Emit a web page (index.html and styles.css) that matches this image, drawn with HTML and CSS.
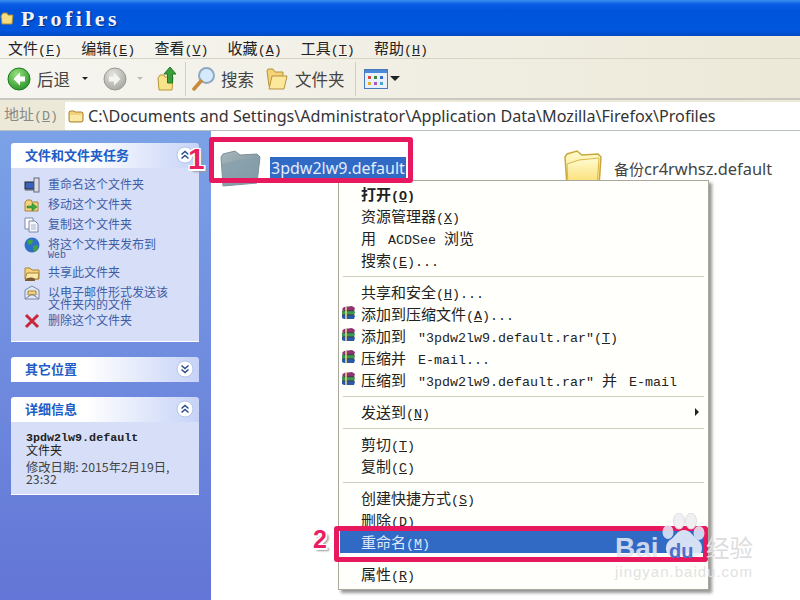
FILE: index.html
```html
<!DOCTYPE html>
<html lang="zh-CN">
<head>
    <meta charset="UTF-8">
    <title>Profiles</title>
    <link rel="stylesheet" href="styles.css">
</head>
<body>

<svg class="defs" width="0" height="0">
    <defs>
        <linearGradient id="yellow" x1="0" y1="0" x2="0" y2="1">
            <stop offset="0" stop-color="#fffbd0"/>
            <stop offset="1" stop-color="#fbdc6a"/>
        </linearGradient>
        <linearGradient id="grey" x1="0" y1="0" x2="1" y2="1">
            <stop offset="0" stop-color="#a9b8bb"/>
            <stop offset="1" stop-color="#6e8a99"/>
        </linearGradient>
        <radialGradient id="green" cx="0.4" cy="0.3" r="0.8">
            <stop offset="0" stop-color="#9be07f"/>
            <stop offset="1" stop-color="#1f8f22"/>
        </radialGradient>
        <radialGradient id="silver" cx="0.4" cy="0.3" r="0.8">
            <stop offset="0" stop-color="#e4e4e0"/>
            <stop offset="1" stop-color="#a3a39d"/>
        </radialGradient>
        <symbol id="rar" viewBox="0 0 14 14">
            <path d="M3 1l8-1 3 2-1 3H3L1 3z" fill="#8e3470"/>
            <path d="M1 5h12l1 1-1 3H2L1 8z" fill="#3a9a52"/>
            <path d="M1 9h12l1 1-1 3H3l-2-1z" fill="#2c58aa"/>
            <path d="M1 4.800h12.500M1 8.800h12.500" stroke="#3a3a3a" stroke-width="0.800"/>
            <path d="M5 1v12" stroke="#e6d88e" stroke-width="1.600"/>
        </symbol>
        <symbol id="chev-up" viewBox="0 0 18 18">
            <circle cx="9" cy="9" r="8" fill="#fff" stroke="#b5c4e8"/>
            <path d="M5.500 8.500 9 5.500l3.500 3M5.500 12.500 9 9.500l3.500 3" fill="none" stroke="#2a4a8c" stroke-width="1.500"/>
        </symbol>
        <symbol id="chev-down" viewBox="0 0 18 18">
            <circle cx="9" cy="9" r="8" fill="#fff" stroke="#b5c4e8"/>
            <path d="M5.500 5.500 9 8.500l3.500-3M5.500 9.500 9 12.500l3.500-3" fill="none" stroke="#2a4a8c" stroke-width="1.500"/>
        </symbol>
    </defs>
</svg>

<div class="window">
    <div class="titlebar">
        <svg class="title-icon" width="16" height="14" viewBox="0 0 16 14"><path d="M1 4l2-3h4l1 2h5l-1 9H2z" fill="#f5dc80" stroke="#a88a30"/></svg>
        <span class="title-text">Profiles</span>
    </div>

    <div class="menubar">
        <span class="menu-item">文件<span class="m">(<u>F</u>)</span></span>
        <span class="menu-item">编辑<span class="m">(<u>E</u>)</span></span>
        <span class="menu-item">查看<span class="m">(<u>V</u>)</span></span>
        <span class="menu-item">收藏<span class="m">(<u>A</u>)</span></span>
        <span class="menu-item">工具<span class="m">(<u>T</u>)</span></span>
        <span class="menu-item">帮助<span class="m">(<u>H</u>)</span></span>
    </div>

    <div class="toolbar">
        <svg class="nav-icon" width="24" height="24" viewBox="0 0 24 24"><circle cx="12" cy="12" r="11" fill="url(#green)" stroke="#1b7a20"/><path d="M13 5.500 6.500 12l6.500 6.500v-4h5v-5h-5z" fill="#fff"/></svg>
        <span class="tool-label back-label">后退</span>
        <span class="drop"></span>
        <svg class="nav-icon next" width="24" height="24" viewBox="0 0 24 24"><circle cx="12" cy="12" r="11" fill="url(#silver)" stroke="#9a9a94"/><path d="M11 5.500 17.500 12 11 18.500v-4H6v-5h5z" fill="#f4f4f0"/></svg>
        <span class="drop off"></span>
        <svg class="up-icon" width="20" height="26" viewBox="0 0 20 26"><path d="M1 12l2-3h4l1 2h8l-1 13H2z" fill="#f8e28a" stroke="#b8963a"/><path d="M13 1l6 7h-3.500v9h-5V8H7z" fill="#3a9f3a" stroke="#1f7a24"/></svg>
        <span class="tool-sep"></span>
        <svg class="search-icon" width="24" height="26" viewBox="0 0 24 26"><circle cx="14.500" cy="9.500" r="7.500" fill="#d5eafc" stroke="#8fa8c0" stroke-width="2"/><path d="M9 15 2 23" stroke="#c98a3a" stroke-width="3.500" stroke-linecap="round"/></svg>
        <span class="tool-label">搜索</span>
        <svg class="folders-icon" width="22" height="24" viewBox="0 0 22 24"><path d="M1 4l1-2h5l2 3h8v14H3z" fill="#f3d376" stroke="#b8923a"/><path d="M3 22 6 9h15l-3 13z" fill="#fbe89a" stroke="#b8923a"/></svg>
        <span class="tool-label">文件夹</span>
        <span class="tool-sep second"></span>
        <svg class="views-icon" width="24" height="20" viewBox="0 0 24 20"><rect x="0.500" y="0.500" width="23" height="19" fill="#e8f0fb" stroke="#4a78b8"/><rect x="1" y="1" width="22" height="3" fill="#4a88d8"/><path d="M4 7h3v3H4z" fill="#d84a3a"/><path d="M10 7h3v3h-3z" fill="#3a8a3a"/><path d="M16 7h3v3h-3z" fill="#3a6ac8"/><path d="M4 13h3v3H4z" fill="#e0b030"/><path d="M10 13h3v3h-3z" fill="#a858b8"/><path d="M16 13h3v3h-3z" fill="#48a8c8"/></svg>
        <span class="drop dark"></span>
    </div>

    <div class="addressbar">
        <span class="address-label">地址<span class="m">(<u>D</u>)</span></span>
        <div class="address-box">
            <svg width="16" height="14" viewBox="0 0 16 14"><path d="M1 12V3l1-1h4l1 1h7l1 1v8l-1 1H2z" fill="#f3d27a" stroke="#a8843a"/><path d="M2 6h12v6H2z" fill="#fbe9a8"/></svg>
            <span class="address-text">C:\Documents and Settings\Administrator\Application Data\Mozilla\Firefox\Profiles</span>
        </div>
    </div>

    <div class="main">
        <div class="sidebar">
            <div class="panel tasks">
                <div class="panel-head">
                    <span>文件和文件夹任务</span>
                    <svg width="18" height="18"><use href="#chev-up"/></svg>
                </div>
                <ul class="task-list">
                    <li>
                        <svg width="16" height="16" viewBox="0 0 16 16"><rect x="1" y="5" width="9" height="7" fill="#3a62b8" stroke="#223"/><rect x="10" y="1" width="5" height="14" fill="#d8dce8" stroke="#667"/><path d="M1 13h9" stroke="#556"/></svg>
                        <span>重命名这个文件夹</span>
                    </li>
                    <li>
                        <svg width="16" height="16" viewBox="0 0 16 16"><path d="M1 14V5l2-2h4l1 2h6v9z" fill="#f3d27a" stroke="#a8843a"/><path d="M3 9h5V6l5 4-5 4v-3H3z" fill="#3fa63f" stroke="#1f7a24" stroke-width="0.500"/></svg>
                        <span>移动这个文件夹</span>
                    </li>
                    <li>
                        <svg width="16" height="16" viewBox="0 0 16 16"><path d="M1 1h8v11H1z" fill="#fff" stroke="#7a8aa8"/><path d="M5 4h6l3 3v8H5z" fill="#f4f6fc" stroke="#7a8aa8"/><path d="M7 8h5M7 10h5M7 12h5" stroke="#a8b4cc"/></svg>
                        <span>复制这个文件夹</span>
                    </li>
                    <li>
                        <svg width="16" height="16" viewBox="0 0 16 16"><circle cx="8" cy="8" r="7.500" fill="#2f6fc8"/><path d="M3 4l4-2 2 2-1 3-3 1zM9 9l5-1-1 5-3 2z" fill="#3fa63f"/></svg>
                        <div>将这个文件夹发布到<div class="web">Web</div></div>
                    </li>
                    <li>
                        <svg width="16" height="16" viewBox="0 0 16 16"><path d="M1 14V3h5l2 2h7v9z" fill="#f3d27a" stroke="#a8843a"/><path d="M1 14l2-6h12l-1 6z" fill="#fbe9a8" stroke="#a8843a"/><path d="M1 15c3-3 7-3 10-1v2H1z" fill="#7a5a30"/></svg>
                        <span>共享此文件夹</span>
                    </li>
                    <li>
                        <svg width="16" height="16" viewBox="0 0 16 16"><path d="M1 5l7-4 7 4v9H1z" fill="#dfe6f4" stroke="#7a8aa8"/><path d="M4 6h8v4H4z" fill="#f3d27a" stroke="#a8843a"/><path d="M1 14l7-5 7 5" fill="none" stroke="#7a8aa8"/></svg>
                        <span>以电子邮件形式发送该<br>文件夹内的文件</span>
                    </li>
                    <li>
                        <svg width="16" height="16" viewBox="0 0 16 16"><path d="M2 2l12 12M14 2 2 14" stroke="#c8283c" stroke-width="3"/></svg>
                        <span>删除这个文件夹</span>
                    </li>
                </ul>
            </div>

            <div class="panel places">
                <div class="panel-head">
                    <span>其它位置</span>
                    <svg width="18" height="18"><use href="#chev-down"/></svg>
                </div>
            </div>

            <div class="panel details">
                <div class="panel-head">
                    <span>详细信息</span>
                    <svg width="18" height="18"><use href="#chev-up"/></svg>
                </div>
                <div class="detail-body">
                    <div class="detail-name">3pdw2lw9.default</div>
                    <div>文件夹</div>
                    <div class="detail-date">修改日期: 2015年2月19日,<br>23:32</div>
                </div>
            </div>
        </div>

        <div class="files">
            <div class="file selected">
                <svg width="42" height="38" viewBox="0 0 42 38"><path d="M3 36 1 7l2-3 12-3 5 4 17-1 3 3-3 26z" fill="url(#grey)" stroke="#7d9098"/><path d="M3 36 2 14l14-4 23-2-2 25z" fill="#86a0ad" opacity="0.700"/></svg>
                <span class="file-name">3pdw2lw9.default</span>
            </div>
            <div class="file other">
                <svg width="38" height="38" viewBox="0 0 38 38"><path d="M3 36 1 7l2-3 10-3 5 4 16-1 3 3-2 29z" fill="url(#yellow)" stroke="#c8a83a" stroke-width="1.500"/><path d="M4 36 3 14l12-4 20-2-2 28z" fill="url(#yellow)" stroke="#d8b84a"/></svg>
                <span class="file-name"><span class="cjk-name">备份</span>cr4rwhsz.default</span>
            </div>
        </div>
    </div>
</div>

<div class="context-menu">
    <div class="row strong">打开<span class="m">(<u>O</u>)</span></div>
    <div class="row">资源管理器<span class="m">(<u>X</u>)</span></div>
    <div class="row">用<span class="m q"> ACDSee </span>浏览</div>
    <div class="row">搜索<span class="m">(<u>E</u>)...</span></div>
    <div class="sep"></div>
    <div class="row">共享和安全<span class="m">(<u>H</u>)...</span></div>
    <div class="row"><svg class="rar" width="14" height="14"><use href="#rar"/></svg>添加到压缩文件<span class="m">(<u>A</u>)...</span></div>
    <div class="row"><svg class="rar" width="14" height="14"><use href="#rar"/></svg>添加到<span class="m q"> "3pdw2lw9.default.rar"(<u>T</u>)</span></div>
    <div class="row"><svg class="rar" width="14" height="14"><use href="#rar"/></svg>压缩并<span class="m q"> E-mail...</span></div>
    <div class="row"><svg class="rar" width="14" height="14"><use href="#rar"/></svg>压缩到<span class="m q"> "3pdw2lw9.default.rar" </span>并<span class="m q"> E-mail</span></div>
    <div class="sep"></div>
    <div class="row has-sub">发送到<span class="m">(<u>N</u>)</span><span class="sub-arrow"></span></div>
    <div class="sep"></div>
    <div class="row">剪切<span class="m">(<u>T</u>)</span></div>
    <div class="row">复制<span class="m">(<u>C</u>)</span></div>
    <div class="sep"></div>
    <div class="row">创建快捷方式<span class="m">(<u>S</u>)</span></div>
    <div class="row">删除<span class="m">(<u>D</u>)</span></div>
    <div class="row active">重命名<span class="m">(<u>M</u>)</span></div>
    <div class="sep"></div>
    <div class="row">属性<span class="m">(<u>R</u>)</span></div>
</div>

<!-- annotations drawn over the screenshot -->
<div class="frame frame-file"></div>
<div class="frame frame-rename"></div>
<div class="step step-1">1</div>
<div class="step step-2">2</div>

<div class="watermark">
    <svg class="paw" width="44" height="46" viewBox="0 0 44 46">
        <ellipse cx="7" cy="19" rx="5.500" ry="7" fill="#e6ebf8" opacity="0.850"/>
        <ellipse cx="18" cy="8" rx="5.500" ry="8" fill="#f0f0f2" stroke="#e0e0e4"/>
        <ellipse cx="30" cy="8" rx="5.500" ry="8" fill="#f0f0f2" stroke="#e0e0e4"/>
        <ellipse cx="38" cy="20" rx="5.500" ry="7" fill="#e6ebf8" opacity="0.850"/>
        <path d="M23 17c-7 0-9 7-14 10-6 4-6 17 5 17 3 0 6-1 9-1s6 1 9 1c11 0 11-13 5-17-5-3-7-10-14-10z" fill="#e8edf9" opacity="0.900"/>
    </svg>
    <span class="wm-bai">Bai</span><span class="wm-du">du</span><span class="wm-jy">经验</span>
    <div class="wm-url">jingyan.baidu.com</div>
</div>

</body>
</html>
```

FILE: styles.css
```css
* {
    box-sizing: border-box;
}

html, body {
    margin: 0;
    height: 100%;
    overflow: hidden;
}

body {
    position: relative;
    width: 800px;
    height: 600px;
    font-family: "Noto Sans CJK SC", "Liberation Sans", sans-serif;
    font-size: 15px;
    color: #222;
    background: #fff;
}

.defs {
    position: absolute;
}

.m {
    font-family: "Liberation Mono", monospace;
    font-size: 13.33px;
}

.q {
    margin-left: 4px;
}

.window {
    display: flex;
    flex-direction: column;
    height: 600px;
}

/* title bar */
.titlebar {
    display: flex;
    align-items: center;
    height: 36px;
    padding-top: 2px;
    background: linear-gradient(#3b8ff0 0, #0a5fe6 4px, #0054dc 10px, #0056de 30px, #0049c4 36px);
}

.title-icon {
    margin-right: 5px;
}

.title-text {
    font-family: "Liberation Serif", serif;
    font-weight: bold;
    font-size: 22px;
    letter-spacing: 3.400px;
    color: #f0f4ff;
    text-shadow: 1px 1px 1px #0a2a80;
}

/* menu */
.menubar {
    display: flex;
    align-items: center;
    height: 23px;
    padding-left: 8px;
    gap: 19.200px;
    background: linear-gradient(90deg, #f6f5f1, #ece9d8);
    border-bottom: 1px solid #d8d4c4;
}

.menu-item {
    white-space: nowrap;
}

/* toolbar */
.toolbar {
    display: flex;
    align-items: center;
    height: 41px;
    padding-left: 7px;
    background: linear-gradient(90deg, #f6f5f0, #ece9d8);
    border-bottom: 2px solid #c8c8c0;
}

.tool-label {
    font-size: 16.500px;
    color: #444;
    white-space: nowrap;
}

.back-label {
    margin-left: 6px;
}

.drop {
    width: 0;
    height: 0;
    margin-left: 12px;
    border-top: 3px solid #222;
    border-left: 3px solid transparent;
    border-right: 3px solid transparent;
}

.drop.off {
    border-top-color: #bbb;
    margin-left: 10px;
}

.drop.dark {
    margin-left: 2px;
    border-top-width: 5px;
    border-left-width: 5px;
    border-right-width: 5px;
}

.nav-icon.next {
    margin-left: 15px;
}

.up-icon {
    margin-left: 14px;
}

.tool-sep {
    width: 1px;
    height: 34px;
    margin: 0 6px 0 8px;
    background: #d2cfc0;
}

.tool-sep.second {
    margin: 0 8px 0 10px;
}

.search-icon {
    margin-right: 5px;
}

.folders-icon {
    margin: 0 7px 0 12px;
}

/* address */
.addressbar {
    display: flex;
    align-items: stretch;
    height: 31px;
    padding-top: 2px;
    background: #ece9d8;
    border-bottom: 1px solid #b8c0c0;
}

.address-label {
    width: 65px;
    padding: 1px 0 0 4px;
    color: #8a8a84;
}

.address-box {
    flex: 1;
    display: flex;
    align-items: center;
    gap: 4px;
    padding-left: 3px;
    background: #fff;
    white-space: nowrap;
}

.address-text {
    font-family: "Noto Sans", sans-serif;
    font-size: 16.150px;
    color: #333;
}

/* main area */
.main {
    flex: 1;
    display: flex;
    min-height: 0;
}

.sidebar {
    flex: none;
    width: 211px;
    padding: 12px 12px 0 11px;
    background: linear-gradient(#7ba2e7, #6375d6);
}

.panel {
    margin-bottom: 15px;
}

.panel-head {
    display: flex;
    align-items: center;
    justify-content: space-between;
    height: 25px;
    padding: 0 5px 2px 14px;
    font-size: 13px;
    font-weight: bold;
    color: #215dc6;
    background: linear-gradient(90deg, #fff, #fff 40%, #c6d3f7);
    border-radius: 3px 3px 0 0;
}

.task-list {
    list-style: none;
    margin: 0;
    height: 174px;
    padding: 8px 0 0 13px;
    background: #d6dff7;
    border-bottom: 1px solid #fff;
}

.task-list li {
    display: flex;
    gap: 8px;
    min-height: 18px;
    margin-bottom: 2px;
    padding-top: 2px;
    font-size: 12px;
    line-height: 12px;
    color: #3c5da8;
}

.task-list svg {
    flex: none;
    margin: -1px 0 -3px;
}

.web {
    height: 12px;
    font-family: "Liberation Mono", monospace;
    font-size: 10px;
}

.detail-body {
    height: 73px;
    padding: 10px 8px 0 15px;
    font-size: 12px;
    line-height: 12px;
    background: #d6dff7;
    border-bottom: 1px solid #fff;
}

.detail-name {
    font-family: "Liberation Mono", monospace;
    font-weight: bold;
    font-size: 11.700px;
}

.detail-date {
    margin-top: 5px;
    font-size: 12.300px;
    color: #444;
}

/* file list */
.files {
    flex: 1;
    display: grid;
    grid-template-columns: 344px 1fr;
    padding: 19px 0 0 9px;
    align-items: start;
}

.file {
    display: flex;
    align-items: flex-start;
    gap: 8px;
}

.file-name {
    height: 21px;
    margin-top: 7px;
    padding: 2px 1px 0;
    font-family: "Noto Sans", sans-serif;
    font-size: 16px;
    line-height: 19px;
    color: #444;
    white-space: nowrap;
}

.cjk-name {
    font-family: "Noto Sans CJK SC", sans-serif;
    font-size: 15px;
}

.selected .file-name {
    color: #e6ecfa;
    background: #316ac5;
}

.other svg {
    margin-right: 3px;
}

.other .file-name {
    font-size: 16.400px;
}

/* context menu */
.context-menu {
    position: absolute;
    left: 338px;
    top: 180px;
    width: 371px;
    height: 410px;
    padding-top: 2px;
    background: #fffffb;
    border: 1px solid #aca899;
    box-shadow: 3px 3px 3px rgba(80, 80, 80, 0.6);
}

.row {
    position: relative;
    height: 22px;
    padding-left: 22px;
    line-height: 22px;
    white-space: pre;
}

.strong {
    font-weight: bold;
}

.strong .m {
    font-weight: bold;
}

.active {
    color: #dfe8fa;
    background: #316ac5;
    margin: 0 1px;
    padding-left: 21px;
}

.rar {
    position: absolute;
    left: 2px;
    top: 3px;
}

.sep {
    height: 1px;
    margin: 5px 4px 4px;
    background: #cfccc0;
}

.sub-arrow {
    position: absolute;
    right: 9px;
    top: 7px;
    border-left: 4px solid #222;
    border-top: 4px solid transparent;
    border-bottom: 4px solid transparent;
}

/* annotations */
.frame {
    position: absolute;
    border: 5px solid #e8185e;
    border-radius: 3px;
}

.frame-file {
    left: 209px;
    top: 137px;
    width: 204px;
    height: 46px;
}

.frame-rename {
    left: 334px;
    top: 526px;
    width: 374px;
    height: 36px;
}

.step {
    position: absolute;
    font-family: "Liberation Sans", sans-serif;
    font-weight: bold;
    color: #ea1f62;
    text-shadow: -1.500px -1.500px 0 #fff, 1.500px -1.500px 0 #fff, -1.500px 1.500px 0 #fff, 1.500px 1.500px 0 #fff, 3px 3px 2px #999;
}

.step-1 {
    left: 188px;
    top: 142px;
    font-size: 30px;
    line-height: 34px;
}

.step-2 {
    left: 313px;
    top: 525px;
    font-size: 25px;
    line-height: 28px;
}

.watermark {
    position: absolute;
    left: 615px;
    top: 513px;
    width: 150px;
    height: 80px;
    font-family: "Liberation Sans", sans-serif;
    font-weight: bold;
    color: rgba(225, 230, 245, 0.880);
}

.paw {
    position: absolute;
    left: 46px;
    top: 0;
}

.wm-bai {
    position: absolute;
    left: 0;
    top: 20px;
    font-size: 28px;
    line-height: 30px;
}

.wm-du {
    position: absolute;
    left: 54px;
    top: 27px;
    font-size: 20px;
    line-height: 22px;
    color: #4f6fc4;
}

.wm-jy {
    position: absolute;
    left: 91px;
    top: 20px;
    font-family: "Noto Sans CJK SC", sans-serif;
    font-size: 23.500px;
    line-height: 28px;
    font-weight: normal;
    color: #dcdcde;
    white-space: nowrap;
}

.wm-url {
    position: absolute;
    left: 0;
    top: 50px;
    font-size: 15px;
    line-height: 18px;
    font-weight: normal;
    letter-spacing: 1px;
    color: #e2e2e4;
    white-space: nowrap;
}
```
